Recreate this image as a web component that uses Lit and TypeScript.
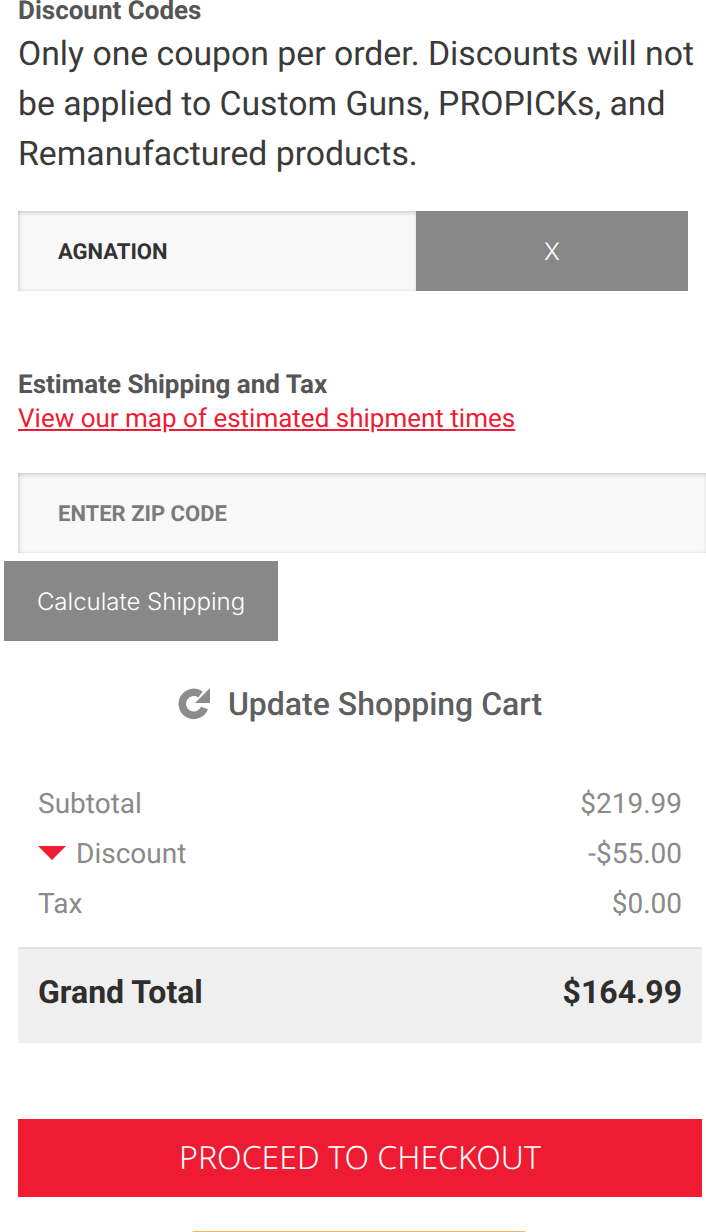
import { LitElement, html, css } from "lit";
import { customElement } from "lit/decorators.js";

@customElement("app-root")
export class AppRoot extends LitElement {
  static styles = css`
    :host { display: block; width: 706px; height: 1232px; overflow: hidden; background: #fff; font-family: Roboto, sans-serif; color: #333; text-rendering: geometricPrecision; }
    .page { display: flex; flex-direction: column; }
    .label { font-weight: 700; font-size: 26px; line-height: 30px; color: #555; margin: -4px 0 0 18px; }
    .intro { font-size: 33.75px; line-height: 50px; color: #3a3a3a; margin: 4px 0 0 18px; width: 688px; white-space: nowrap; }
    .coupon { display: flex; margin: 31px 0 0 18px; width: 670px; height: 80px; }
    .field { background: #f8f8f8; box-shadow: inset 0 3px 4px -1px rgba(0,0,0,.16), inset 3px 0 4px -2px rgba(0,0,0,.12), inset 0 -2px 3px -2px rgba(0,0,0,.1); display: flex; align-items: center; padding: 2px 0 0 40px; font-weight: 700; font-size: 22px; box-sizing: border-box; }
    .coupon .field { width: 398px; color: #333; }
    .gray { background: #888; color: #fff; font-family: Inter, sans-serif; font-weight: 300; font-size: 24px; display: flex; align-items: center; justify-content: center; }
    .x { width: 272px; }
    .ship { margin: 79px 0 0 18px; }
    .ship .title { font-weight: 700; font-size: 26px; line-height: 30px; color: #555; }
    .ship a { display: block; color: #ef1b32; font-size: 26px; line-height: 34px; margin-top: 2px; text-decoration: underline; }
    .zip { margin: 37px 0 0 18px; height: 80px; width: 688px; color: #7a7a7a; }
    .calc { margin: 8px 0 0 4px; width: 274px; height: 80px; }
    .update { display: flex; align-items: center; justify-content: center; gap: 18px; margin: 43px 0 0 0; padding-left: 14px; height: 40px; font-size: 32px; font-weight: 500; color: #5f5f5f; }
    .update svg { filter: blur(0.5px); }
    .rows { margin: 54px 0 0 18px; width: 684px; }
    .row { display: flex; justify-content: space-between; align-items: center; height: 50px; padding: 0 20px; font-size: 28px; color: #8a8a8a; box-sizing: border-box; }
    .disc { display: flex; align-items: center; gap: 10px; }
    .grand { display: flex; justify-content: space-between; align-items: center; height: 96px; margin-top: 19px; padding: 0 20px 8px; background: #efefef; border-top: 2px solid #e4e4e4; box-sizing: border-box; font-size: 32px; font-weight: 700; color: #2e2e2e; }
    .checkout { margin: 76px 0 0 18px; width: 684px; height: 78px; padding-bottom: 2px; box-sizing: border-box; background: #ef1b32; color: #fff; display: flex; align-items: center; justify-content: center; font-family: "Noto Sans", sans-serif; font-weight: 300; font-size: 32px; }
    .next { margin: 34px 0 0 190px; width: 338px; height: 30px; border: 1px solid #f4b064; border-radius: 4px 4px 0 0; box-sizing: border-box; background: #fff; }
  `;

  render() {
    return html`<div class="page">
      <div class="label">Discount Codes</div>
      <p class="intro">Only one coupon per order. Discounts will not<br />be applied to Custom Guns, PROPICKs, and<br />Remanufactured products.</p>
      <div class="coupon">
        <div class="field">AGNATION</div>
        <div class="gray x">X</div>
      </div>
      <div class="ship">
        <div class="title">Estimate Shipping and Tax</div>
        <a href="#">View our map of estimated shipment times</a>
      </div>
      <div class="field zip">ENTER ZIP CODE</div>
      <div class="gray calc">Calculate Shipping</div>
      <div class="update">
        <svg width="32" height="32" viewBox="0 0 32 32"><path d="M26.5 20A11.5 11.5 0 1 1 22.5 6.5" fill="none" stroke="#8c8c8c" stroke-width="7.5"/><path d="M32 0v15H17z" fill="#8c8c8c"/></svg>
        <span>Update Shopping Cart</span>
      </div>
      <div class="rows">
        <div class="row"><span>Subtotal</span><span>$219.99</span></div>
        <div class="row"><span class="disc"><svg width="28" height="14" viewBox="0 0 28 14"><path d="M0 0h28L14 14z" fill="#ef1b32"/></svg>Discount</span><span>-$55.00</span></div>
        <div class="row"><span>Tax</span><span>$0.00</span></div>
        <div class="grand"><span>Grand Total</span><span>$164.99</span></div>
      </div>
      <div class="checkout">PROCEED TO CHECKOUT</div>
      <div class="next"></div>
    </div>`;
  }
}
